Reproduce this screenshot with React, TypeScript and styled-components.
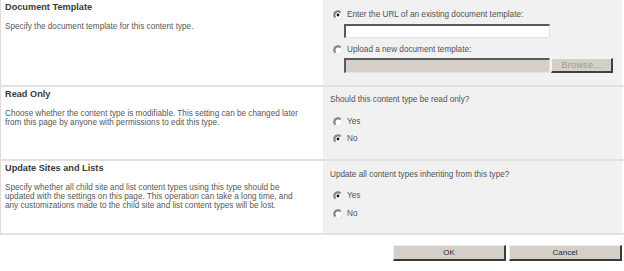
import React from 'react';
import styled, { createGlobalStyle } from 'styled-components';

const GlobalStyle = createGlobalStyle`
  html, body {
    margin: 0;
    padding: 0;
    background: #fff;
  }
  body {
    font-family: "Liberation Sans", Arial, sans-serif;
  }
`;

const Radio = ({ checked }: { checked?: boolean }) => (
  <RadioIcon width="10" height="10" viewBox="0 0 10 10">
    <circle cx="5" cy="5" r="4.2" fill="#fff" />
    <path d="M8 2 A4.2 4.2 0 0 0 2 8" fill="none" stroke="#808080" strokeWidth="1.1" />
    <path d="M7.3 2.7 A3.2 3.2 0 0 0 2.7 7.3" fill="none" stroke="#404040" strokeWidth="0.9" />
    <path d="M2 8 A4.2 4.2 0 0 0 8 2" fill="none" stroke="#e8e8e8" strokeWidth="1.1" />
    {checked && <circle cx="5" cy="5" r="1.4" fill="#111" />}
  </RadioIcon>
);

const App = () => {
  return (
    <>
      <GlobalStyle />
      <Page>
        <Row height={85}>
          <Info>
            <Title>Document Template</Title>
            <Desc>Specify the document template for this content type.</Desc>
          </Info>
          <Control top={10}>
            <Option>
              <Radio checked />
              <span>Enter the URL of an existing document template:</span>
            </Option>
            <TextBox />
            <Option gap={7}>
              <Radio />
              <span>Upload a new document template:</span>
            </Option>
            <UploadRow>
              <TextBox disabledLook />
              <BrowseBtn>Browse...</BrowseBtn>
            </UploadRow>
          </Control>
        </Row>
        <Row height={72}>
          <Info>
            <Title>Read Only</Title>
            <Desc>
              Choose whether the content type is modifiable. This setting can be changed later
              <br />
              from this page by anyone with permissions to edit this type.
            </Desc>
          </Info>
          <Control top={8}>
            <Question>Should this content type be read only?</Question>
            <Option gap={12}>
              <Radio />
              <span>Yes</span>
            </Option>
            <Option gap={7}>
              <Radio checked />
              <span>No</span>
            </Option>
          </Control>
        </Row>
        <Row height={72}>
          <Info>
            <Title>Update Sites and Lists</Title>
            <Desc>
              Specify whether all child site and list content types using this type should be
              <br />
              updated with the settings on this page. This operation can take a long time, and
              <br />
              any customizations made to the child site and list content types will be lost.
            </Desc>
          </Info>
          <Control top={9}>
            <Question>Update all content types inheriting from this type?</Question>
            <Option gap={11}>
              <Radio checked />
              <span>Yes</span>
            </Option>
            <Option gap={8}>
              <Radio />
              <span>No</span>
            </Option>
          </Control>
        </Row>
        <Footer>
          <PushButton>OK</PushButton>
          <PushButton>Cancel</PushButton>
        </Footer>
      </Page>
    </>
  );
};

export default App;

const Page = styled.div`
  width: 624px;
  height: 271px;
  overflow: hidden;
  color: #4c4c4c;
`;

const Row = styled.div<{ height: number }>`
  display: grid;
  grid-template-columns: 323px 299px;
  height: ${({ height }) => `${height}px`};
  border-bottom: 2px solid #e2e2e2;
`;

const Info = styled.div`
  border-left: 1px solid #dcdcdc;
  padding: 2px 4px 0;
  background: #fff;
`;

const Title = styled.div`
  font-size: 9.2px;
  line-height: 11px;
  font-weight: bold;
  color: #3b3b3b;
`;

const Desc = styled.div`
  margin-top: 9px;
  font-size: 8.2px;
  line-height: 9px;
  color: #585858;
`;

const Control = styled.div<{ top: number }>`
  background: #f1f1f1;
  padding: ${({ top }) => `${top}px`} 0 0 7px;
  font-size: 8.2px;
  color: #525252;
`;

const Question = styled.div`
  line-height: 10px;
`;

const Option = styled.div<{ gap?: number }>`
  display: flex;
  align-items: center;
  gap: 4px;
  margin-top: ${({ gap }) => `${gap ?? 0}px`};
  height: 10px;
  line-height: 10px;
  padding-left: 3px;
`;

const RadioIcon = styled.svg`
  display: block;
  flex: none;
`;

const TextBox = styled.div<{ disabledLook?: boolean }>`
  box-sizing: border-box;
  width: 206px;
  height: ${({ disabledLook }) => (disabledLook ? '15px' : '14px')};
  margin: ${({ disabledLook }) => (disabledLook ? '0' : '4px')} 0 0 14px;
  background: ${({ disabledLook }) => (disabledLook ? '#d4d0c8' : '#fff')};
  border-style: solid;
  border-width: 2px 1px 1px 2px;
  border-color: #5a5a5a #e4e4e4 #e4e4e4 #5a5a5a;
`;

const UploadRow = styled.div`
  display: flex;
  align-items: flex-start;
  margin-top: 3px;
`;

const BrowseBtn = styled.div`
  box-sizing: border-box;
  width: 62px;
  height: 15px;
  margin-left: 1px;
  background: #d4d0c8;
  border-style: solid;
  border-width: 1px 2px 2px 1px;
  border-color: #f4f4f4 #404040 #404040 #f4f4f4;
  color: #9a9a9a;
  font-size: 9px;
  line-height: 12px;
  text-align: center;
  letter-spacing: 0.3px;
`;

const Footer = styled.div`
  display: flex;
  justify-content: flex-end;
  gap: 3px;
  padding: 10px 2px 0 0;
`;

const PushButton = styled.div`
  box-sizing: border-box;
  width: 113px;
  height: 16px;
  background: #d4d0c8;
  border-style: solid;
  border-width: 1px 2px 2px 1px;
  border-color: #f0f0f0 #3c3c3c #3c3c3c #f0f0f0;
  color: #2a2a2a;
  font-size: 8px;
  line-height: 13px;
  text-align: center;
`;
